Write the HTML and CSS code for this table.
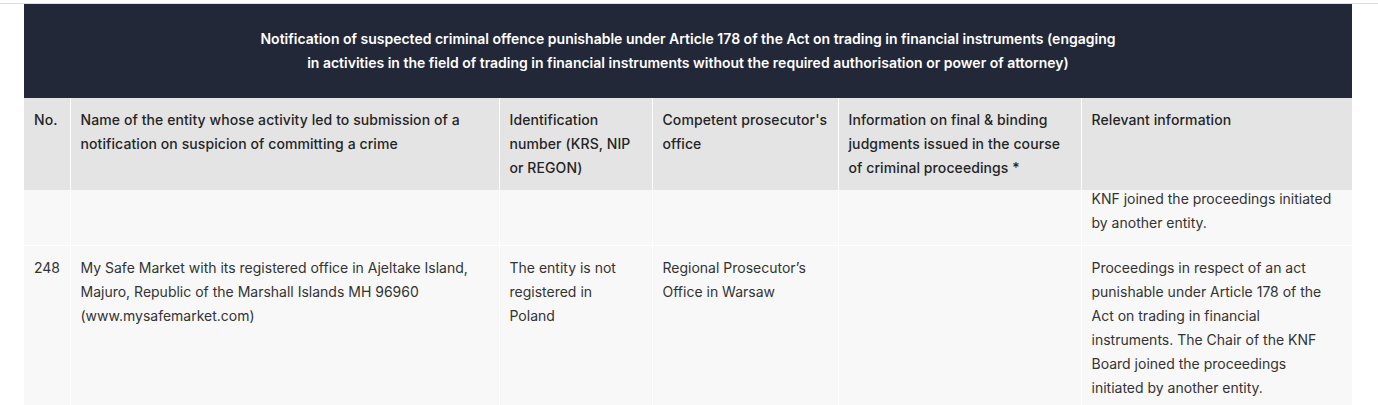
FILE: index.html
```html
<!DOCTYPE html>
<html lang="en">
<head>
<meta charset="utf-8">
<title>Notifications</title>
<link rel="stylesheet" href="styles.css">
</head>
<body>
<div class="topline"></div>
<table class="notif">
  <colgroup>
    <col class="c-no">
    <col class="c-name">
    <col class="c-id">
    <col class="c-pros">
    <col class="c-info">
    <col class="c-rel">
  </colgroup>
  <thead>
    <tr class="title-row">
      <th colspan="6"><div class="title-text">Notification of suspected criminal offence punishable under Article 178 of the Act on trading in financial instruments (engaging in activities in the field of trading in financial instruments without the required authorisation or power of attorney)</div></th>
    </tr>
    <tr class="head-row">
      <th>No.</th>
      <th>Name of the entity whose activity led to submission of a notification on suspicion of committing a crime</th>
      <th>Identification number (KRS, NIP or REGON)</th>
      <th>Competent prosecutor's office</th>
      <th>Information on final &amp; binding judgments issued in the course of criminal proceedings *</th>
      <th>Relevant information</th>
    </tr>
  </thead>
  <tbody>
    <tr class="frag-row">
      <td></td>
      <td></td>
      <td></td>
      <td></td>
      <td></td>
      <td><div class="frag-text">KNF joined the proceedings initiated by another entity.</div></td>
    </tr>
    <tr>
      <td>248</td>
      <td>My Safe Market with its registered office in Ajeltake Island, Majuro, Republic of the Marshall Islands MH 96960 (www.mysafemarket.com)</td>
      <td>The entity is not registered in Poland</td>
      <td>Regional Prosecutor’s Office in Warsaw</td>
      <td></td>
      <td>Proceedings in respect of an act punishable under Article 178 of the Act on trading in financial instruments. The Chair of the KNF Board joined the proceedings initiated by another entity.</td>
    </tr>
  </tbody>
</table>
</body>
</html>
```
FILE: styles.css
```css
html, body {
  margin: 0;
  padding: 0;
  background: #ffffff;
}
body {
  font-family: Inter, "Noto Sans", "Liberation Sans", sans-serif;
  font-size: 14px;
  line-height: 24px;
  color: #333333;
  overflow: hidden;
}
.topline {
  height: 3px;
  border-bottom: 1px solid #dedede;
}
.notif {
  margin-left: 24px;
  width: 1328px;
  table-layout: fixed;
  border-collapse: collapse;
  border-spacing: 0;
}
.c-no { width: 46px; }
.c-name { width: 429px; }
.c-id { width: 153px; }
.c-pros { width: 186px; }
.c-info { width: 243px; }
.c-rel { width: 271px; }

.notif th,
.notif td {
  padding: 10px 12px 10px 10px;
  text-align: left;
  vertical-align: top;
  border-left: 1px solid #ffffff;
}
.notif th:first-child,
.notif td:first-child {
  border-left: none;
}
.title-row th {
  background: #222838;
  color: #ffffff;
  font-weight: 600;
  text-align: center;
  padding: 23px 10px;
}
.title-text {
  max-width: 868px;
  margin: 0 auto;
}
.head-row th {
  background: #e4e4e4;
  color: #252525;
  font-weight: 500;
  letter-spacing: 0.09px;
  padding-right: 6px;
}
.notif tbody td {
  background: #f8f8f8;
  color: #333333;
  font-weight: 400;
  border-top: 1px solid #ffffff;
}
.notif tbody .frag-row td {
  border-top: none;
  padding-top: 0;
}
.frag-text {
  margin-top: -3px;
}
```
